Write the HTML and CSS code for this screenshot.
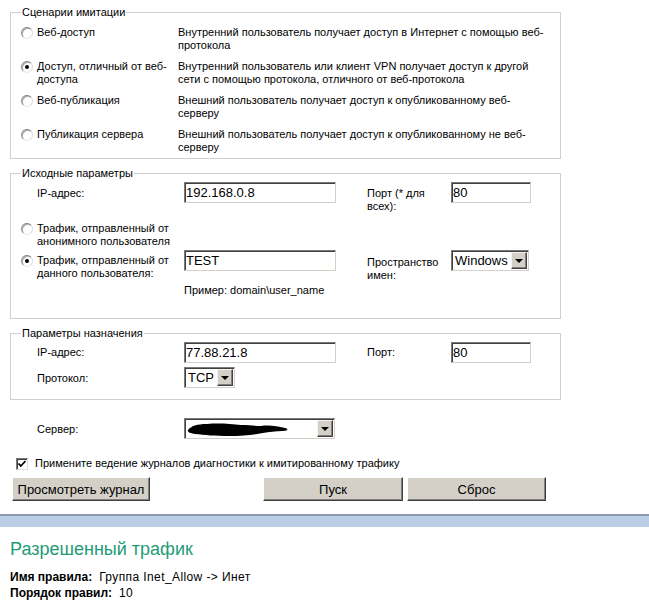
FILE: index.html
```html
<!DOCTYPE html>
<html lang="ru">
<head>
<meta charset="utf-8">
<title>Имитация трафика</title>
<link rel="stylesheet" href="styles.css">
</head>
<body>
<div class="page">
  <div class="form">
    <fieldset class="fs fs-scen">
      <legend>Сценарии имитации</legend>
      <div class="scen-row">
        <span class="radio"></span>
        <span class="scen-label">Веб-доступ</span>
        <span class="scen-desc">Внутренний пользователь получает доступ в Интернет с помощью веб-<br>протокола</span>
      </div>
      <div class="scen-row">
        <span class="radio checked"></span>
        <span class="scen-label">Доступ, отличный от веб-<br>доступа</span>
        <span class="scen-desc">Внутренний пользователь или клиент VPN получает доступ к другой<br>сети с помощью протокола, отличного от веб-протокола</span>
      </div>
      <div class="scen-row">
        <span class="radio"></span>
        <span class="scen-label">Веб-публикация</span>
        <span class="scen-desc">Внешний пользователь получает доступ к опубликованному веб-<br>серверу</span>
      </div>
      <div class="scen-row">
        <span class="radio"></span>
        <span class="scen-label">Публикация сервера</span>
        <span class="scen-desc">Внешний пользователь получает доступ к опубликованному не веб-<br>серверу</span>
      </div>
    </fieldset>

    <fieldset class="fs fs-src">
      <legend>Исходные параметры</legend>
      <div class="row r-ip">
        <span class="lbl lbl-ind">IP-адрес:</span>
        <input class="txt w-main" type="text" value="192.168.0.8">
        <span class="lbl lbl2">Порт (* для<br>всех):</span>
        <input class="txt w-port" type="text" value="80">
      </div>
      <div class="row r-anon">
        <span class="radio"></span>
        <span class="lbl lbl-r">Трафик, отправленный от<br>анонимного пользователя</span>
      </div>
      <div class="row r-user">
        <span class="radio checked r-off"></span>
        <span class="lbl lbl-r lbl-user">Трафик, отправленный от<br>данного пользователя:</span>
        <input class="txt w-main" type="text" value="TEST">
        <span class="lbl lbl2 lbl-ns">Пространство<br>имен:</span>
        <span class="sel w-ns"><span class="sel-val">Windows</span><span class="sel-arrow"></span></span>
      </div>
      <div class="row r-ex">
        <span class="lbl">Пример: domain\user_name</span>
      </div>
    </fieldset>

    <fieldset class="fs fs-dst">
      <legend>Параметры назначения</legend>
      <div class="row r-dip">
        <span class="lbl lbl-ind lbl-d">IP-адрес:</span>
        <input class="txt w-main" type="text" value="77.88.21.8">
        <span class="lbl lbl2 lbl-d">Порт:</span>
        <input class="txt w-port" type="text" value="80">
      </div>
      <div class="row r-proto">
        <span class="lbl lbl-ind lbl-p">Протокол:</span>
        <span class="sel w-tcp"><span class="sel-val">TCP</span><span class="sel-arrow"></span></span>
      </div>
    </fieldset>

    <div class="row r-server">
      <span class="lbl lbl-ind lbl-p">Сервер:</span>
      <span class="sel w-server">
        <span class="sel-val redact">
          <svg width="104" height="16" viewBox="0 0 104 16" aria-hidden="true">
            <path d="M1 9 C4 5 10 3 20 3 C32 2 44 3 54 4 C62 4 68 5 74 5 C82 4 90 5 98 7 C102 8 101 10 96 10 C88 10 82 11 76 12 C66 14 56 15 42 15 C28 15 18 14 8 13 C3 12 0 11 1 9 Z" fill="#000"/>
          </svg>
        </span>
        <span class="sel-arrow"></span>
      </span>
    </div>

    <div class="row r-check">
      <span class="check">
        <svg width="10" height="10" viewBox="0 0 10 10" aria-hidden="true"><path d="M1.5 4.5 L3.8 7 L8.5 2" fill="none" stroke="#000" stroke-width="1.8"/></svg>
      </span>
      <span class="lbl">Примените ведение журналов диагностики к имитированному трафику</span>
    </div>

    <div class="btn-row">
      <button class="btn b-log" type="button">Просмотреть журнал</button>
      <button class="btn b-run" type="button">Пуск</button>
      <button class="btn b-reset" type="button">Сброс</button>
    </div>
  </div>

  <div class="bar"></div>

  <div class="result">
    <h2 class="res-title">Разрешенный трафик</h2>
    <div class="res-line"><span class="res-key">Имя правила:</span><span class="res-val">Группа Inet_Allow -&gt; Инет</span></div>
    <div class="res-line"><span class="res-key">Порядок правил:</span><span class="res-val">10</span></div>
  </div>
</div>
</body>
</html>
```

FILE: styles.css
```css
html, body {
  margin: 0;
  padding: 0;
  background: #fff;
}
body {
  font-family: "Liberation Sans", Arial, sans-serif;
  font-size: 11px;
  line-height: 13px;
  color: #000;
}
.page {
  width: 649px;
  padding-top: 6px;
}
.form {
  padding-left: 10px;
}

/* fieldsets */
.fs {
  box-sizing: border-box;
  width: 551px;
  margin: 0;
  border: 1px solid #d0d0d0;
  padding: 0 0 0 10px;
  min-width: 0;
}
.fs legend {
  padding: 0 1px;
  font-size: 11px;
  line-height: 13px;
}
.fs-scen { padding-top: 7px; padding-bottom: 4px; }
.fs-src { margin-top: 8px; padding-top: 2px; padding-bottom: 21px; }
.fs-dst { margin-top: 8px; padding-top: 2px; padding-bottom: 11px; }

/* radio */
.radio {
  box-sizing: border-box;
  flex: none;
  width: 12px;
  height: 12px;
  margin: 1px 4px 0 0;
  border-radius: 50%;
  border: 1px solid;
  border-color: #7c7c7c #dcdcdc #e8e8e8 #8c8c8c;
  background: #fff;
  box-shadow: inset 1px 1px 0 #b0b0b0;
  display: inline-flex;
  align-items: center;
  justify-content: center;
}
.radio.checked::after {
  content: "";
  width: 4px;
  height: 4px;
  border-radius: 50%;
  background: #000;
}

/* scenarios */
.scen-row {
  display: flex;
  align-items: flex-start;
  white-space: nowrap;
}
.scen-row + .scen-row { margin-top: 8px; }
.scen-label { width: 141px; flex: none; }
.scen-desc { flex: none; }

/* rows */
.row {
  display: flex;
  align-items: flex-start;
  white-space: nowrap;
}
.lbl { flex: none; }
.lbl-ind { width: 147px; padding-left: 16px; padding-top: 5px; }
.lbl-r { width: 147px; }
.lbl2 { width: 84px; margin-left: 31px; padding-top: 5px; }
.r-anon { margin-top: 9px; }
.r-user { margin-top: 2px; }
.lbl-user { padding-top: 4px; }
.r-off { margin-top: 5px; }
.lbl-ns { padding-top: 6px; }
.r-ex { margin-top: 2px; padding-left: 163px; }
.lbl-d { padding-top: 4px; }
.lbl-p { padding-top: 5px; }
.r-proto { margin-top: 4px; }

/* text inputs */
.txt {
  box-sizing: border-box;
  flex: none;
  height: 21px;
  margin: 0;
  padding: 0 1px;
  border: 1px solid;
  border-color: #7a7a7a #d4d0c8 #d4d0c8 #7a7a7a;
  box-shadow: inset 1px 1px 0 #404040;
  font-family: "Liberation Sans", Arial, sans-serif;
  font-size: 13px;
  color: #000;
  background: #fff;
  outline: none;
}
.w-main { width: 152px; }
.w-port { width: 80px; }

/* select look */
.sel {
  box-sizing: border-box;
  flex: none;
  display: inline-flex;
  align-items: stretch;
  height: 21px;
  border: 1px solid;
  border-color: #7a7a7a #d4d0c8 #d4d0c8 #7a7a7a;
  box-shadow: inset 1px 1px 0 #404040;
  background: #fff;
  font-size: 13px;
  line-height: 17px;
  padding: 1px 1px 1px 1px;
}
.sel-val {
  flex: 1;
  padding-left: 2px;
  overflow: hidden;
}
.sel-arrow {
  box-sizing: border-box;
  flex: none;
  width: 16px;
  background: #d4d0c8;
  border: 1px solid;
  border-color: #f4f4f4 #404040 #404040 #f4f4f4;
  box-shadow: inset -1px -1px 0 #808080;
  position: relative;
}
.sel-arrow::after {
  content: "";
  position: absolute;
  left: 3px;
  top: 6px;
  border-left: 4px solid transparent;
  border-right: 4px solid transparent;
  border-top: 4px solid #000;
}
.w-ns { width: 78px; }
.w-tcp { width: 51px; }
.w-server { width: 151px; }
.redact { display: flex; align-items: center; padding-left: 1px; }
.redact svg { display: block; }

.r-server { margin-top: 18px; padding-left: 11px; }

/* checkbox */
.r-check { margin-top: 18px; padding-left: 6px; align-items: center; }
.check {
  box-sizing: border-box;
  flex: none;
  width: 12px;
  height: 12px;
  margin-right: 7px;
  border: 1px solid;
  border-color: #7a7a7a #e0e0e0 #e0e0e0 #7a7a7a;
  box-shadow: inset 1px 1px 0 #404040;
  background: #fff;
  display: inline-flex;
  align-items: center;
  justify-content: center;
}
.check svg { display: block; }

/* buttons */
.btn-row {
  display: flex;
  margin-top: 7px;
  padding-left: 2px;
}
.btn {
  box-sizing: border-box;
  height: 24px;
  margin: 0;
  padding: 0;
  background: #d4d0c8;
  border: 1px solid;
  border-color: #ffffff #404040 #404040 #ffffff;
  box-shadow: inset -1px -1px 0 #808080;
  font-family: "Liberation Sans", Arial, sans-serif;
  font-size: 13px;
  color: #000;
}
.b-log { width: 138px; }
.b-run { width: 140px; margin-left: 113px; }
.b-reset { width: 139px; margin-left: 4px; }

/* bar */
.bar {
  margin-top: 13px;
  height: 11px;
  border-top: 2px solid #8a9aae;
  background: #b9cde5;
}

/* result */
.result { padding-left: 10px; }
.res-title {
  margin: 11px 0 0;
  font-size: 18px;
  line-height: 22px;
  font-weight: normal;
  color: #1f9b77;
}
.res-line {
  line-height: 16px;
  font-size: 12px;
}
.res-title + .res-line { margin-top: 9px; }
.res-key { font-weight: bold; margin-right: 7px; }
.res-val { letter-spacing: 0.4px; }
```
